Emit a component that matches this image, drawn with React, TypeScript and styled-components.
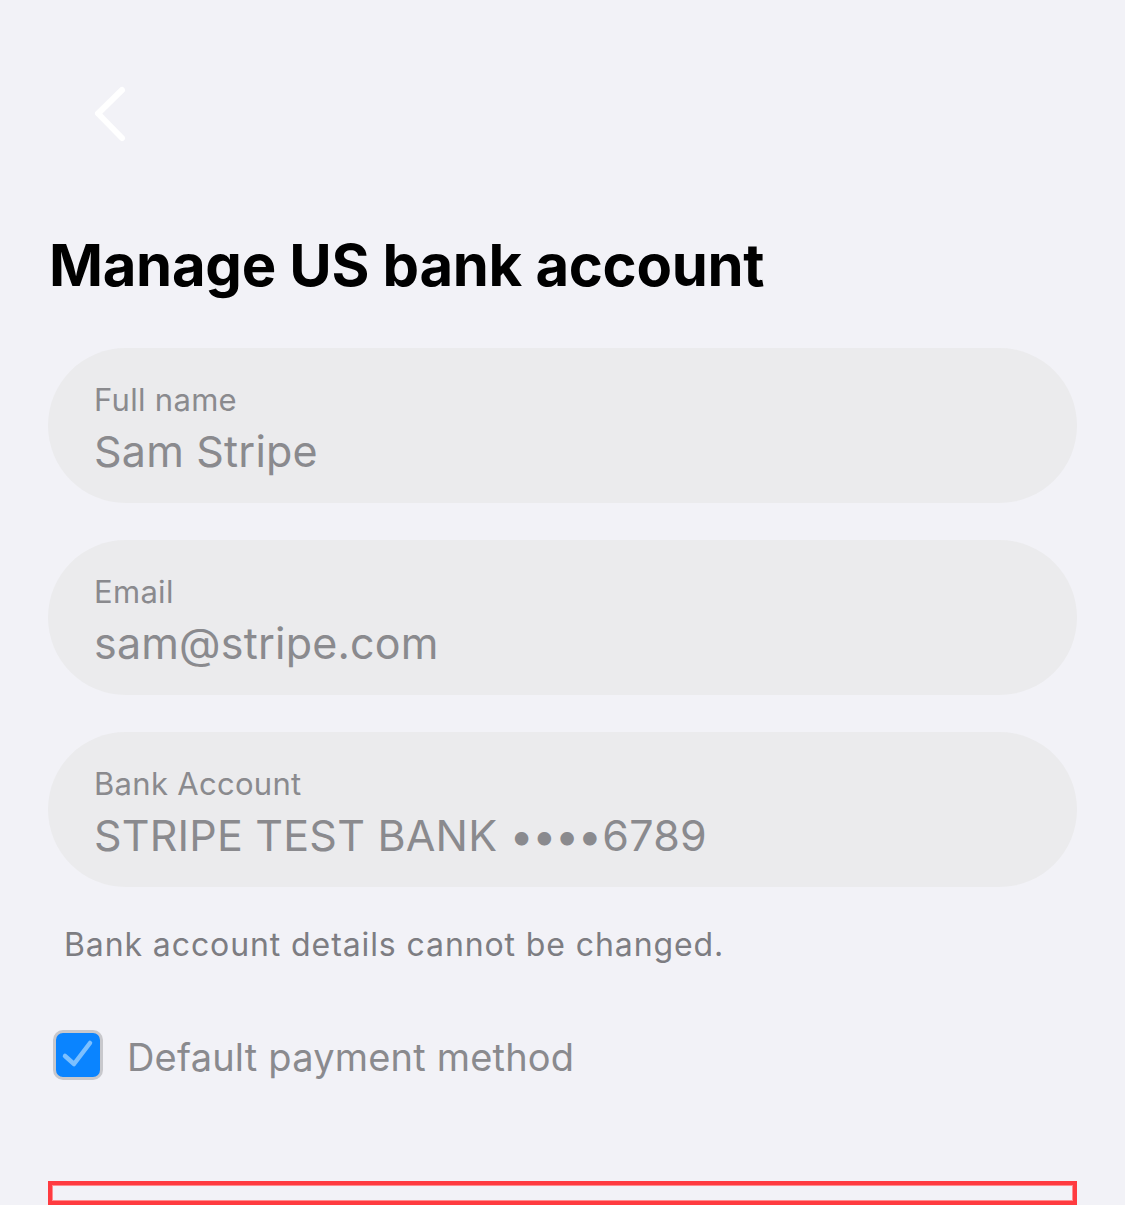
import * as React from 'react'
import styled, { createGlobalStyle } from 'styled-components'

const GlobalStyle = createGlobalStyle`
  html, body {
    margin: 0;
    padding: 0;
    background: #f2f2f7;
    font-family: Inter, "Noto Sans", sans-serif;
  }
`

const Screen = styled.div`
  width: 1125px;
  height: 1205px;
  overflow: hidden;
  box-sizing: border-box;
  padding: 84px 48px 0 48px;
  display: flex;
  flex-direction: column;
`

const BackButton = styled.button`
  width: 60px;
  height: 60px;
  margin-left: 42px;
  padding: 0;
  border: none;
  background: transparent;
  display: flex;
  align-items: center;
  justify-content: flex-start;
`

const Title = styled.h1`
  margin: 87px 0 49px 1px;
  font-size: 58px;
  line-height: 68px;
  font-weight: 700;
  letter-spacing: -0.3px;
  color: #000;
`

const Fields = styled.div`
  display: flex;
  flex-direction: column;
  gap: 37px;
`

const Field = styled.div`
  height: 155px;
  border-radius: 78px;
  background: #ebebed;
  box-sizing: border-box;
  padding: 32px 46px 0 46px;
  display: flex;
  flex-direction: column;
`

const Label = styled.span`
  font-size: 31px;
  line-height: 40px;
  color: #8a8a8e;
  letter-spacing: 0.3px;
`

const Value = styled.span`
  margin-top: 6px;
  font-size: 43px;
  line-height: 50px;
  color: #8a8a8e;
  letter-spacing: 0.2px;
`

const Dots = styled.span`
  letter-spacing: -1.5px;
  margin-right: 2px;
`

const Note = styled.p`
  margin: 38px 0 0 16px;
  font-size: 32px;
  line-height: 40px;
  color: #7d7d82;
  letter-spacing: 0.9px;
`

const CheckRow = styled.label`
  margin: 63px 0 0 5px;
  display: flex;
  align-items: center;
  gap: 24px;
`

const Box = styled.span`
  width: 50px;
  height: 50px;
  box-sizing: border-box;
  border-radius: 10px;
  border: 3px solid #c8c8cc;
  background: #0a84ff;
  display: flex;
  align-items: center;
  justify-content: center;
`

const CheckText = styled.span`
  font-size: 38px;
  line-height: 50px;
  color: #8a8a8e;
  letter-spacing: 0.2px;
  padding-top: 4px;
`

const RemoveButton = styled.div`
  margin-top: 99px;
  height: 120px;
  box-sizing: border-box;
  border: 4px solid #ff3b40;
  box-shadow: inset 0 0 0 1px #ff8c8f;
`

export default function App() {
  return (
    <>
      <GlobalStyle />
      <Screen>
        <BackButton aria-label="Back">
          <svg width="40" height="60" viewBox="0 0 40 60">
            <path d="M32 6 L8 29.5 L32 54" fill="none" stroke="#ffffff" strokeWidth="6" strokeLinecap="round" strokeLinejoin="round" />
          </svg>
        </BackButton>
        <Title>Manage US bank account</Title>
        <Fields>
          <Field>
            <Label>Full name</Label>
            <Value>Sam Stripe</Value>
          </Field>
          <Field>
            <Label>Email</Label>
            <Value>sam@stripe.com</Value>
          </Field>
          <Field>
            <Label>Bank Account</Label>
            <Value>STRIPE TEST BANK <Dots>••••</Dots>6789</Value>
          </Field>
        </Fields>
        <Note>Bank account details cannot be changed.</Note>
        <CheckRow>
          <Box>
            <svg width="36" height="36" viewBox="0 0 36 36">
              <path d="M5 19 L14 27 L30 6" fill="none" stroke="#7cc0ff" strokeWidth="4.5" strokeLinecap="round" strokeLinejoin="round" />
            </svg>
          </Box>
          <CheckText>Default payment method</CheckText>
        </CheckRow>
        <RemoveButton />
      </Screen>
    </>
  )
}
